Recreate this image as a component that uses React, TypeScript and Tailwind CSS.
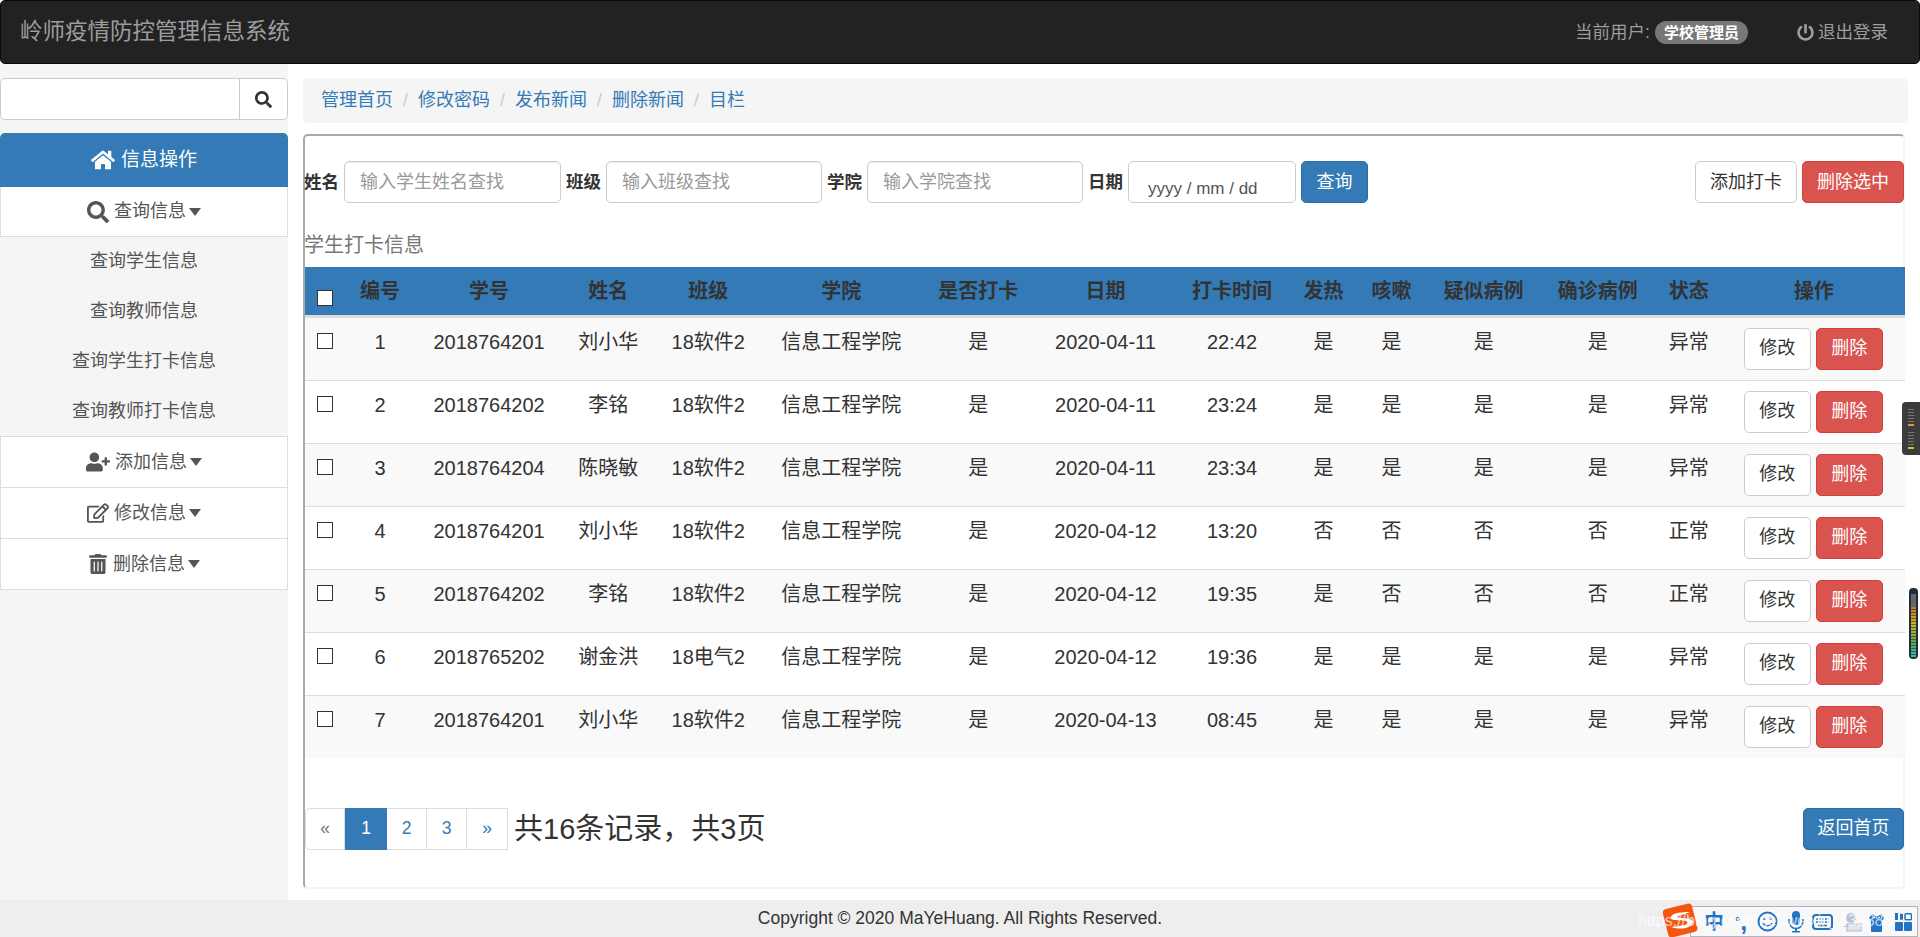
import { FaHome, FaSearch, FaUserPlus, FaRegEdit, FaTrashAlt, FaPowerOff } from "react-icons/fa";

const font = "font-['Liberation_Sans','Noto_Sans_CJK_SC',sans-serif]";

const columns = [
  { label: "编号", width: "w-[70px]" },
  { label: "学号", width: "w-[148px]" },
  { label: "姓名", width: "w-[90px]" },
  { label: "班级", width: "w-[110px]" },
  { label: "学院", width: "w-[156px]" },
  { label: "是否打卡", width: "w-[118px]" },
  { label: "日期", width: "w-[136px]" },
  { label: "打卡时间", width: "w-[117px]" },
  { label: "发热", width: "w-[66px]" },
  { label: "咳嗽", width: "w-[70px]" },
  { label: "疑似病例", width: "w-[114px]" },
  { label: "确诊病例", width: "w-[114px]" },
  { label: "状态", width: "w-[68px]" },
  { label: "操作", width: "w-[182px]" },
];

const rows = [
  ["1", "2018764201", "刘小华", "18软件2", "信息工程学院", "是", "2020-04-11", "22:42", "是", "是", "是", "是", "异常"],
  ["2", "2018764202", "李铭", "18软件2", "信息工程学院", "是", "2020-04-11", "23:24", "是", "是", "是", "是", "异常"],
  ["3", "2018764204", "陈晓敏", "18软件2", "信息工程学院", "是", "2020-04-11", "23:34", "是", "是", "是", "是", "异常"],
  ["4", "2018764201", "刘小华", "18软件2", "信息工程学院", "是", "2020-04-12", "13:20", "否", "否", "否", "否", "正常"],
  ["5", "2018764202", "李铭", "18软件2", "信息工程学院", "是", "2020-04-12", "19:35", "是", "否", "否", "否", "正常"],
  ["6", "2018765202", "谢金洪", "18电气2", "信息工程学院", "是", "2020-04-12", "19:36", "是", "是", "是", "是", "异常"],
  ["7", "2018764201", "刘小华", "18软件2", "信息工程学院", "是", "2020-04-13", "08:45", "是", "是", "是", "是", "异常"],
];

function Caret() {
  return <span className="-ml-[2px] inline-block border-x-[6.5px] border-t-[8px] border-x-transparent border-t-[#555] align-middle" />;
}

function MenuHead({ icon, label, height }: { icon: React.ReactNode; label: string; height: string }) {
  return (
    <div className={`flex ${height} items-center justify-center gap-[5px] border border-t-0 border-[#ddd] bg-white text-[#555]`}>
      {icon}
      <span>{label}</span>
      <Caret />
    </div>
  );
}

function TextInput({ placeholder, width }: { placeholder: string; width: string }) {
  return (
    <input
      placeholder={placeholder}
      className={`h-[42px] ${width} rounded-[5px] border border-[#ccc] bg-white px-[15px] text-[18px] shadow-[inset_0_1px_1px_rgba(0,0,0,0.075)] outline-none placeholder:text-[#999]`}
    />
  );
}

function ImeBar() {
  return (
    <div className="absolute bottom-0 right-[2px] flex h-[34px] w-[256px] items-end">
      <svg width="38" height="34" viewBox="0 0 38 34" className="absolute left-0 top-0 z-10">
        <rect x="3" y="3" width="30" height="29" rx="4" fill="#f4550f" transform="rotate(-14 18 17)" />
        <path d="M28 9C16 9 8 11 9 15c1 4 14 1 17 4 1 3-8 4-17 5 9 3 20 2 22-5 0-5-12-3-16-5 3-2 9-3 13-5z" fill="#fff" />
      </svg>
      <div className="ml-[28px] flex h-[31px] flex-1 items-center border border-[#b4b4c0] bg-[#f8f8f8] pl-[13px]">
        <span className="w-[19px] text-[20px] font-bold leading-none text-[#2273c4]">中</span>
        <span className="ml-[12px] flex w-[13px] items-center whitespace-nowrap font-bold leading-none text-[#2273c4]">
          <span className="text-[13px]">°</span>
          <span className="text-[25px]">,</span>
        </span>
        <svg className="ml-[9px]" width="21" height="21" viewBox="0 0 21 21" fill="none" stroke="#2273c4" strokeWidth="2">
          <circle cx="10.500" cy="10.500" r="9" />
          <path d="M6 12c2 3.500 7 3.500 9 0" strokeWidth="1.500" />
          <path d="M7.500 6.500v2.500M13.500 6.500v2.500" />
        </svg>
        <svg className="ml-[9px]" width="18" height="24" viewBox="0 0 18 24" fill="#2273c4">
          <rect x="5" y="1" width="8" height="14" rx="4" />
          <path d="M2 9v2.500a7 7 0 0 0 14 0V9" fill="none" stroke="#2273c4" strokeWidth="1.600" />
          <path d="M8 18h2v3h3v1.500H5V21h3z" />
        </svg>
        <svg className="ml-[7px]" width="21" height="16" viewBox="0 0 21 16">
          <rect x="1" y="1" width="19" height="14" rx="3" fill="#f8f8f8" stroke="#2273c4" strokeWidth="2" />
          <path d="M4 5h13M4 8h13" stroke="#2273c4" strokeWidth="1.500" strokeDasharray="2 1" />
          <path d="M6 11.500h9" stroke="#2273c4" strokeWidth="1.500" />
        </svg>
        <svg className="ml-[9px]" width="20" height="20" viewBox="0 0 20 20" fill="#b9c3d2">
          <circle cx="9" cy="6" r="5" />
          <path d="M1 15l5-4h4v4z" />
          <rect x="5" y="12" width="15" height="7" fill="#dfe4ec" stroke="#aeb9c9" />
        </svg>
        <svg className="ml-[6px]" width="17" height="22" viewBox="0 0 17 22" fill="#2273c4">
          <path d="M1 7l3-4 3 2h3l3-2 3 4-2 3v10a1 1 0 0 1-1 1H4a1 1 0 0 1-1-1V10z" />
          <circle cx="6" cy="6.500" r="1" fill="#f8f8f8" />
          <circle cx="11" cy="6.500" r="1" fill="#f8f8f8" />
        </svg>
        <svg className="ml-[10px]" width="17" height="18" viewBox="0 0 17 18" fill="#2273c4">
          <rect width="3" height="7" />
          <rect x="5" y="0.750" width="3" height="6" />
          <rect x="10" y="0.750" width="6.500" height="6" rx="1" fill="none" stroke="#2273c4" strokeWidth="1.500" />
          <rect y="9" width="8" height="9" rx="1" />
          <rect x="9" y="9" width="8" height="9" rx="1" />
        </svg>
      </div>
    </div>
  );
}

export default function App() {
  return (
    <div className={`${font} flex h-[937px] w-[1920px] flex-col overflow-hidden bg-white text-[18px] text-[#333]`}>
      {/* Navbar */}
      <nav className="flex h-[64px] shrink-0 items-center justify-between rounded-[5px] border border-[#080808] bg-[#222] pl-[19px] pr-[31px] text-[17.500px] text-[#9d9d9d]">
        <span className="text-[22.500px]">岭师疫情防控管理信息系统</span>
        <div className="flex items-center">
          <span>当前用户:</span>
          <span className="ml-[5px] rounded-full bg-[#777] px-[9px] py-[3px] text-[15px] font-bold leading-[17px] text-white">学校管理员</span>
          <FaPowerOff className="ml-[49px] mr-[4px]" size={17} />
          <span>退出登录</span>
        </div>
      </nav>

      <div className="flex min-h-0 flex-1">
        {/* Sidebar */}
        <aside className="w-[288px] shrink-0 bg-[#f5f5f5] pt-[14px]">
          <div className="flex h-[42px] rounded-[5px] border border-[#ccc] bg-white">
            <input className="min-w-0 flex-1 bg-transparent outline-none" />
            <button className="flex w-[48px] items-center justify-center border-l border-[#ccc] text-[#333]">
              <FaSearch size={17} />
            </button>
          </div>
          <div className="mt-[13px] flex h-[54px] items-center justify-center gap-[6px] rounded-t-[5px] bg-[#337ab7] text-white">
            <FaHome size={24} />
            <span className="text-[19px]">信息操作</span>
          </div>
          <MenuHead height="h-[50px]" icon={<FaSearch size={22} />} label="查询信息" />
          <ul className="h-[199px] text-center text-[#555]">
            <li className="h-[50px] leading-[48px]">查询学生信息</li>
            <li className="h-[50px] leading-[48px]">查询教师信息</li>
            <li className="h-[50px] leading-[48px]">查询学生打卡信息</li>
            <li className="h-[50px] leading-[48px]">查询教师打卡信息</li>
          </ul>
          <div className="border-t border-[#ddd]">
            <MenuHead height="h-[51px]" icon={<FaUserPlus size={24} />} label="添加信息" />
            <MenuHead height="h-[51px]" icon={<FaRegEdit size={22} />} label="修改信息" />
            <MenuHead height="h-[51px]" icon={<FaTrashAlt size={20} />} label="删除信息" />
          </div>
        </aside>

        {/* Main */}
        <main className="min-w-0 flex-1 pl-[15px] pr-[12px] pt-[14px]">
          <div className="flex h-[45px] items-center rounded-[5px] bg-[#f5f5f5] px-[18px] text-[#337ab7]">
            {["管理首页", "修改密码", "发布新闻", "删除新闻", "目栏"].map((item, i) => (
              <span key={item} className="flex items-center">
                {i > 0 && <span className="px-[10px] text-[#ccc]">/</span>}
                {item}
              </span>
            ))}
          </div>

          <section className="mt-[11px] flex h-[755px] w-[1602px] flex-col rounded-[5px] border-2 border-[#f4f4f4] border-l-[#a9a9a9] border-t-[#a9a9a9] pt-[25px]">
            {/* Filters */}
            <div className="-mx-px flex h-[42px] items-center">
              <label className="mr-[5px] text-[17.500px] font-bold">姓名</label>
              <TextInput placeholder="输入学生姓名查找" width="w-[217px]" />
              <label className="ml-[5px] mr-[5px] text-[17.500px] font-bold">班级</label>
              <TextInput placeholder="输入班级查找" width="w-[216px]" />
              <label className="ml-[5px] mr-[5px] text-[17.500px] font-bold">学院</label>
              <TextInput placeholder="输入学院查找" width="w-[216px]" />
              <label className="ml-[5px] mr-[5px] text-[17.500px] font-bold">日期</label>
              <div className="flex h-[42px] w-[168px] items-end rounded-[5px] border border-[#ccc] pb-[1px] pl-[19px] text-[17px] text-[#555]">yyyy / mm / dd</div>
              <button className="ml-[5px] h-[42px] w-[67px] rounded-[5px] border border-[#2e6da4] bg-[#337ab7] text-white">查询</button>
              <button className="ml-auto h-[42px] w-[102px] rounded-[5px] border border-[#ccc] bg-white">添加打卡</button>
              <button className="ml-[5px] h-[42px] w-[102px] rounded-[5px] border border-[#d43f3a] bg-[#d9534f] text-white">删除选中</button>
            </div>

            <p className="-ml-px mt-[27px] h-[37px] text-[20px] leading-[30px] text-[#777]">学生打卡信息</p>

            {/* Table */}
            <table className="w-[1600px] table-fixed border-collapse text-center text-[20px]">
              <thead>
                <tr className="h-[49px] border-b-[3px] border-[#ddd] bg-[#337ab7]">
                  <th className="w-[40px] pt-[15px]">
                    <input type="checkbox" className="mx-auto block h-[16px] w-[16px] appearance-none border border-[#333] bg-white" />
                  </th>
                  {columns.map((col) => (
                    <th key={col.label} className={`${col.width} font-bold`}>{col.label}</th>
                  ))}
                </tr>
              </thead>
              <tbody>
                {rows.map((row, i) => (
                  <tr key={row[0]} className={`border-t border-[#ddd] ${i % 2 === 0 ? "bg-[#f9f9f9]" : "bg-white"}`}>
                    <td className="h-[62px] py-[10px] align-top">
                      <input type="checkbox" className="mx-auto mt-[5px] block h-[16px] w-[16px] appearance-none border border-[#333] bg-white" />
                    </td>
                    {row.map((cell, j) => (
                      <td key={j} className="py-[10px] align-top leading-[28px]">{cell}</td>
                    ))}
                    <td className="py-[10px] pl-[21px] align-top">
                      <div className="flex gap-[5px] text-[18px]">
                        <button className="h-[42px] w-[67px] rounded-[5px] border border-[#ccc] bg-white">修改</button>
                        <button className="h-[42px] w-[67px] rounded-[5px] border border-[#d43f3a] bg-[#d9534f] text-white">删除</button>
                      </div>
                    </td>
                  </tr>
                ))}
              </tbody>
            </table>

            {/* Pagination */}
            <div className="-mr-px mt-[50px] flex h-[42px] items-center">
              <ul className="flex h-[42px] text-[17.500px] text-[#337ab7]">
                <li className="flex w-[40px] items-center justify-center rounded-l-[5px] border border-[#ddd] text-[#777]">«</li>
                <li className="flex w-[42px] items-center justify-center border border-[#337ab7] bg-[#337ab7] text-white">1</li>
                <li className="flex w-[40px] items-center justify-center border border-l-0 border-[#ddd]">2</li>
                <li className="flex w-[40px] items-center justify-center border border-l-0 border-[#ddd]">3</li>
                <li className="flex w-[41px] items-center justify-center border border-l-0 border-[#ddd]">»</li>
              </ul>
              <span className="ml-[6px] mt-[2px] text-[29px]">共16条记录，共3页</span>
              <button className="ml-auto h-[42px] w-[101px] rounded-[5px] border border-[#2e6da4] bg-[#337ab7] text-white">返回首页</button>
            </div>
          </section>
        </main>
      </div>

      {/* Footer */}
      <footer className="relative flex h-[37px] shrink-0 items-center justify-center bg-[#eee] text-[17.500px]">
        <span>Copyright © 2020 MaYeHuang. All Rights Reserved.</span>
        <ImeBar />
        <span className="absolute left-[1638px] top-[9px] z-20 whitespace-nowrap text-[16px] text-white/70">https://blog.csdn.net/weixin_435883</span>
      </footer>

      {/* Floating desktop widgets */}
      <div className="absolute left-[1902px] top-[402px] flex h-[53px] w-[18px] flex-col items-center justify-center gap-[6px] rounded-l-[4px] bg-[#3c3c3c]">
        <div className="h-[17px] w-[6px] border-b-2 border-[#e09b2d] bg-[repeating-linear-gradient(#777_0_1px,transparent_1px_3px)]" />
        <div className="h-[17px] w-[6px] border-b-2 border-[#8fe020] bg-[repeating-linear-gradient(#777_0_1px,transparent_1px_3px)]" />
      </div>
      <div className="absolute left-[1909px] top-[588px] flex h-[71px] w-[9px] flex-col justify-end rounded-[4px] bg-[#1f2f3a] p-[2px]">
        <div className="h-[13px] bg-[#666]" />
        <div className="relative h-[50px] w-full bg-[linear-gradient(#c47a26,#c9b62a,#6aa84f,#2fb8b0)]">
          <div className="absolute inset-0 bg-[repeating-linear-gradient(transparent_0_2px,rgba(0,0,0,0.45)_2px_3px)]" />
        </div>
      </div>
    </div>
  );
}
